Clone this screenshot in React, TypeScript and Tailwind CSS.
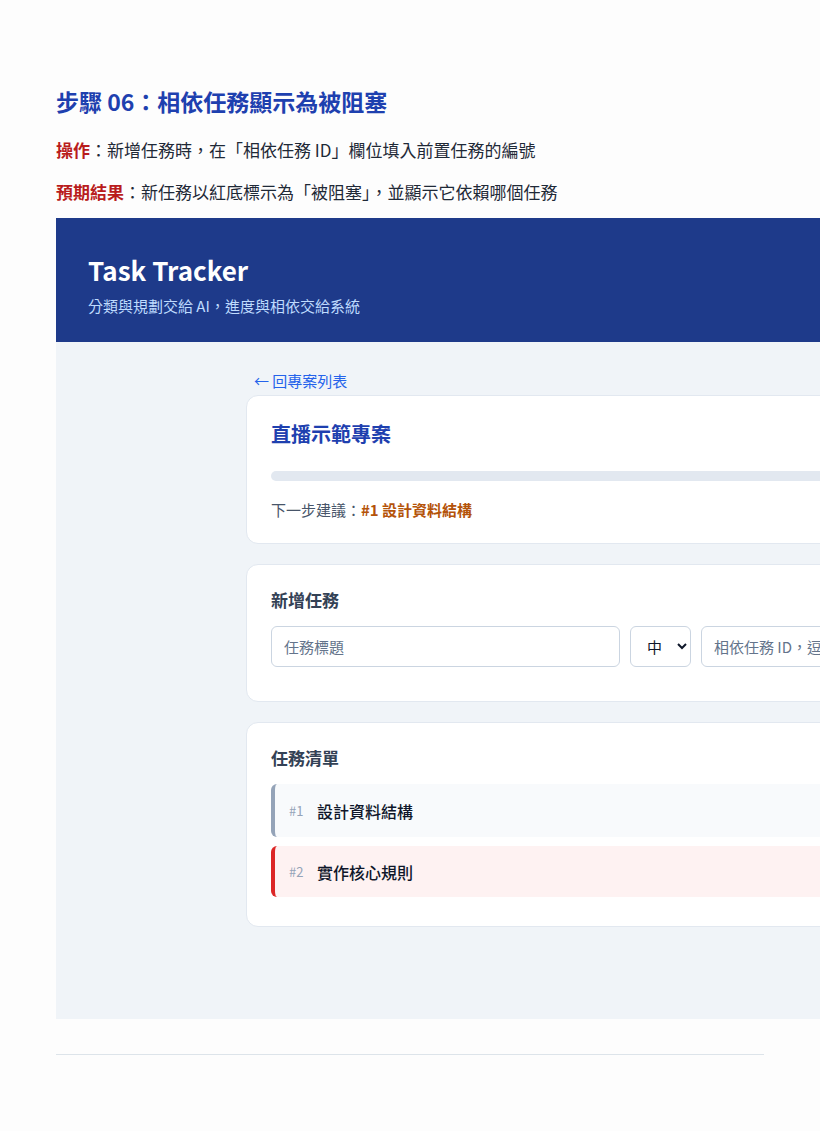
import React from "react";

const font = "font-['Noto_Sans_CJK_TC','Noto_Sans',sans-serif]";

function TaskRow({ id, title, blocked }: { id: number; title: string; blocked?: boolean }) {
  return (
    <div
      className={
        blocked
          ? "flex items-center h-[51px] pl-[14px] rounded-md border-l-4 border-[#dc2626] bg-[#fef2f2]"
          : "flex items-center h-[53px] pl-[14px] rounded-md border-l-4 border-[#94a3b8] bg-[#f8fafc]"
      }
    >
      <span className="text-[13px] text-[#94a3b8] w-[28px]">#{id}</span>
      <span className="text-[16px] font-medium text-[#0f172a]">{title}</span>
    </div>
  );
}

export default function App() {
  return (
    <div className={`${font} w-[820px] min-h-[1131px] bg-[#fdfdfd] overflow-hidden`}>
      <div className="pl-[56px] pt-[85px]">
        <h2 className="text-[23px] leading-[32px] font-bold text-[#1e40af]">步驟 06：相依任務顯示為被阻塞</h2>
        <p className="mt-[19px] text-[17px] leading-[28px] text-[#1f2937]">
          <span className="font-bold text-[#b91c1c]">操作</span>：新增任務時，在「相依任務 ID」欄位填入前置任務的編號
        </p>
        <p className="mt-[14px] text-[17px] leading-[28px] text-[#1f2937]">
          <span className="font-bold text-[#b91c1c]">預期結果</span>：新任務以紅底標示為「被阻塞」，並顯示它依賴哪個任務
        </p>

        <div className="mt-[12px] w-[1340px] bg-[#f0f4f8]">
          <header className="bg-[#1e3a8a] h-[124px] px-8 pt-[35px]">
            <h1 className="text-[26px] leading-[34px] font-bold text-white">Task Tracker</h1>
            <p className="mt-[8px] text-[15px] leading-[22px] text-[#bfdbfe]">分類與規劃交給 AI，進度與相依交給系統</p>
          </header>

          <main className="w-[960px] mx-auto pt-[28px] pb-[92px]">
            <a className="block pl-2 text-[15px] leading-[22px] text-[#2563eb]">← 回專案列表</a>
            <section className="mt-[3px] bg-white border border-[#e2e8f0] rounded-xl px-6 pt-[23px] pb-[22px]">
              <h3 className="text-[20px] leading-[30px] font-bold text-[#1e40af]">直播示範專案</h3>
              <div className="mt-[22px] h-[10px] rounded-full bg-[#e2e8f0]" />
              <p className="mt-[18px] text-[15px] leading-[22px] text-[#475569]">
                下一步建議：<span className="font-bold text-[#b45309]">#1 設計資料結構</span>
              </p>
            </section>

            <section className="mt-[20px] bg-white border border-[#e2e8f0] rounded-xl px-6 pt-[22px] pb-[34px]">
              <h3 className="text-[17px] leading-[26px] font-bold text-[#334155]">新增任務</h3>
              <div className="mt-[13px] flex gap-[10px]">
                <input
                  placeholder="任務標題"
                  className="w-[349px] h-[41px] px-3 text-[15px] border border-[#cbd5e1] rounded-md bg-white placeholder:text-[#64748b] outline-none"
                />
                <select className="w-[61px] h-[41px] px-3 text-[15px] text-[#0f172a] border border-[#cbd5e1] rounded-md bg-white">
                  <option>中</option>
                </select>
                <input
                  placeholder="相依任務 ID，逗號分隔"
                  className="w-[300px] h-[41px] px-3 text-[15px] border border-[#cbd5e1] rounded-md bg-white placeholder:text-[#64748b] outline-none"
                />
              </div>
            </section>

            <section className="mt-[20px] bg-white border border-[#e2e8f0] rounded-xl px-6 pt-[22px] pb-[29px]">
              <h3 className="text-[17px] leading-[26px] font-bold text-[#334155]">任務清單</h3>
              <div className="mt-[13px] flex flex-col gap-[9px]">
                <TaskRow id={1} title="設計資料結構" />
                <TaskRow id={2} title="實作核心規則" blocked />
              </div>
            </section>
          </main>
        </div>

        <hr className="mt-[35px] w-[708px] border-0 border-t border-[#dde4ea]" />
      </div>
    </div>
  );
}
